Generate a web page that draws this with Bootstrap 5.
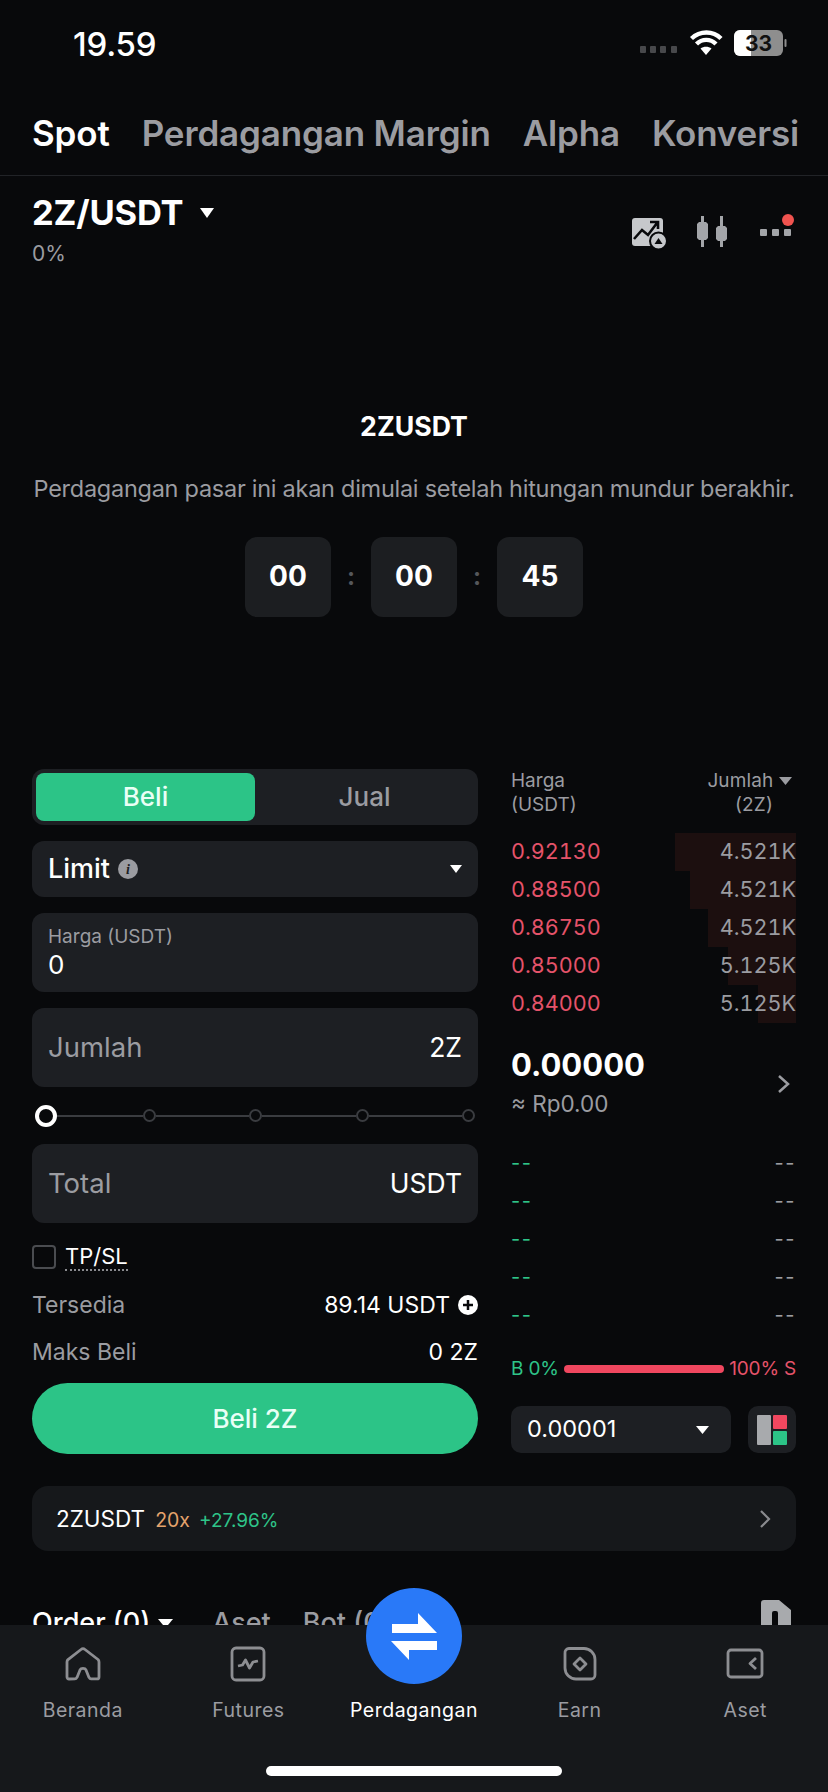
<!DOCTYPE html>
<html lang="id"><head><meta charset="utf-8"><title>Spot</title>
<link rel="stylesheet" href="https://cdn.jsdelivr.net/npm/bootstrap@5.3.0/dist/css/bootstrap.min.css">
<style>
html,body{margin:0;background:#08090b;height:1792px;overflow:hidden}
body{font-family:Inter,"Liberation Sans",sans-serif;color:#fff;font-size:24px;line-height:1.2}
.shell{width:828px;height:1792px}
.mainpane{height:1625px;overflow:hidden;flex:none}
.tg{color:#9b9ca1}.tw{color:#fff}.tr{color:#e5536a}.tgn{color:#2ec489}
.stat{height:90px;padding:0 39px 0 73px}
.stat-time{font-size:33px;font-weight:500;letter-spacing:-.2px}
.tabsbar{height:86px;padding:0 29px 0 32px;border-bottom:1px solid #212327;font-size:35px;font-weight:600;letter-spacing:-.15px}
.tabsbar span{white-space:nowrap}
.pairbar{height:140px;padding:17px 32px 0 32px}
.pair{font-size:34.500px;font-weight:700;letter-spacing:-.2px;line-height:40px}
.pct{font-size:21px;line-height:26px;margin-top:8px}
.hero{height:453px}
.hero h1{font-size:26.700px;font-weight:700;margin:0;line-height:30px;padding-top:95px}
.hero p{font-size:23.500px;letter-spacing:-.27px;margin:33px 0 0;line-height:30px;white-space:nowrap}
.cntr{margin-top:33px}
.cbox{width:86px;height:80px;background:#1c1e21;border-radius:12px;font-size:28px;font-weight:700}
.csep{width:40px;text-align:center;color:#55575b;font-weight:700;font-size:24px}
.trade{padding:0 32px;height:717px}
.lcol{width:446px;flex:none}
.rcol{width:285px;flex:none}
.seg{height:56px;background:#1d1f23;border-radius:12px;padding:4px;font-size:26px;font-weight:500}
.seg div{flex:1 1 0}
.seg .on{background:#2cc487;border-radius:8px;color:#e9fff6}
.fld{background:#1d1f23;border-radius:12px;padding:0 16px;margin-top:16px}
.fld-a{height:56px}.fld-b{height:79px;font-size:27.500px}
.fld-val{font-size:26.500px}
.lbl{font-size:19px;line-height:24px;color:#9b9ca1}
.sld{height:57px;padding:0 3px 0 3px}
.sld-line{height:2px;background:#3a3c40;flex:1 1 auto}
.sld-first{flex:0 0 86px}
.sld-k{width:13px;height:13px;border:2px solid #3a3c40;border-radius:50%;background:#08090b;flex:none}
.sld-k0{width:22px;height:22px;border:4px solid #fff;border-radius:50%;background:#08090b;flex:none}
.chkbox{width:24px;height:24px;border:2px solid #4a4c50;border-radius:4px;margin-right:9px}
.tpsl{font-size:22px;border-bottom:2px dotted #8a8b8f;line-height:25px}
.kv{font-size:23px;line-height:28px}
.buybtn{height:71px;width:100%;background:#2cc487;color:#e9fff6;border:0;border-radius:36px;font-size:26px;font-weight:500;margin-top:17px}
.bookh{font-size:19px;line-height:24px;height:60px}
.bookh-q{padding-right:4px;letter-spacing:.15px}
.bookr{height:38px;font-size:21.600px;font-variant-numeric:tabular-nums;background-repeat:no-repeat;background-position:right;background-image:linear-gradient(#1c0f0f,#1c0f0f)}
.bookd{height:38px;font-size:20px;letter-spacing:1.500px}
.price{font-size:31px;font-weight:700;line-height:38px}
.rp{font-size:22.500px;line-height:28px;margin-top:6px}
.ratiorow{font-size:19px;letter-spacing:-.2px;height:30px;margin-top:20px}
.ratio-bar{height:8px;background:#f0475f;border-radius:4px;flex:1 1 auto;margin:0 5px}
.tick{height:47px;width:220px;background:#1d1f23;border-radius:10px;padding:0 16px;font-size:23.500px}
.layb{height:47px;width:48px;background:#1d1f23;border-radius:10px}
.pcard{height:65px;background:#16181b;border-radius:16px;padding:0 24px;margin:0 32px;font-size:22.500px}
.ordr{padding:0 32px;margin-top:56px;font-size:27px;font-weight:500;height:60px}
.botnav{height:167px;background:#16181b;position:relative}
.navi{flex:1 1 0;padding-top:19px;font-size:19.500px;letter-spacing:.5px}
.navi svg{display:block;margin-bottom:15px}
.navgap{height:40px;margin-bottom:15px}
.nvstroke{fill:none;stroke:#8d8e92;stroke-width:2.800;stroke-linejoin:round}
.fab{position:absolute;left:366px;top:-37px;width:96px;height:96px;border-radius:50%;background:#2979f8}
.homeb{position:absolute;left:266px;top:141px;width:296px;height:10px;border-radius:5px;background:#fff}
</style></head><body>
<div class="shell d-flex flex-column">
<div class="mainpane">
  <div class="stat d-flex justify-content-between align-items-center">
    <div class="stat-time">19.59</div>
    <div class="d-flex align-items-center">
      <svg width="154" height="36" viewBox="0 0 154 36"><g fill="#47484b"><rect x="5" y="19" width="6" height="7" rx="1"/><rect x="15" y="19" width="6" height="7" rx="1"/><rect x="25" y="19" width="6" height="7" rx="1"/><rect x="36" y="19" width="6" height="7" rx="1"/></g><g fill="none" stroke="#fff" stroke-width="4.400"><path d="M56.500 11.500C65 3.500 78 3.500 86 11.500"/><path d="M61.500 17C67 11.500 75.500 11.500 81 17"/></g><path d="M71 28l-5.500-6.500C68.500 19 73.500 19 76.500 21.500z" fill="#fff"/><rect x="99" y="3" width="49" height="26" rx="6" fill="#8e8e8e"/><path d="M105 3h11v26h-11a6 6 0 0 1-6-6V9a6 6 0 0 1 6-6z" fill="#fff"/><rect x="149.500" y="12" width="2" height="8" rx="1" fill="#8e8e8e"/><text x="123.500" y="24" text-anchor="middle" font-family="Inter,sans-serif" font-size="21" font-weight="700" fill="#111">33</text></svg>
    </div>
  </div>
  <div class="tabsbar d-flex justify-content-between align-items-center">
    <span>Spot</span><span class="tg">Perdagangan Margin</span><span class="tg">Alpha</span><span class="tg">Konversi</span>
  </div>
  <div class="pairbar d-flex justify-content-between align-items-start">
    <div>
      <div class="pair d-flex align-items-center">2Z/USDT
        <svg class="ms-3" width="16" height="12" viewBox="0 0 16 12"><path d="M1 1h14L8 11z" fill="#fff"/></svg>
      </div>
      <div class="pct tg">0%</div>
    </div>
    <svg width="164" height="50" viewBox="0 0 164 50" style="margin-top:9px" aria-hidden="true">
      <rect x="0" y="16" width="31" height="28" rx="3" fill="#c6c8cb"/>
      <path d="M2 37l8-9 6 5 9-12M18 20h8v7" fill="none" stroke="#08090b" stroke-width="2.600"/>
      <circle cx="26.500" cy="39" r="8.500" fill="#c6c8cb" stroke="#08090b" stroke-width="2"/><path d="M22.500 42l4-6 4 6z" fill="#08090b"/>
      <g fill="#a3a5a9"><rect x="69" y="14" width="3" height="31"/><path d="M65 22l2-2h7l2 2v14l-2 2h-7l-2-2z"/><rect x="88" y="14" width="3" height="31"/><path d="M84 26l2-2h7l2 2v11l-2 2h-7l-2-2z"/></g>
      <g fill="#a3a5a9"><rect x="128" y="27" width="7" height="7" rx="1"/><rect x="140" y="27" width="7" height="7" rx="1"/><rect x="152" y="27" width="7" height="7" rx="1"/></g>
      <circle cx="156" cy="18" r="6" fill="#f0534f"/>
    </svg>
  </div>
  <div class="hero text-center d-flex flex-column align-items-center">
    <h1>2ZUSDT</h1>
    <p class="tg">Perdagangan pasar ini akan dimulai setelah hitungan mundur berakhir.</p>
    <div class="cntr d-flex align-items-center">
      <div class="cbox d-flex align-items-center justify-content-center">00</div><div class="csep">:</div>
      <div class="cbox d-flex align-items-center justify-content-center">00</div><div class="csep">:</div>
      <div class="cbox d-flex align-items-center justify-content-center">45</div>
    </div>
  </div>
  <div class="trade d-flex justify-content-between">
    <div class="lcol">
      <div class="seg d-flex text-center align-items-stretch">
        <div class="on d-flex align-items-center justify-content-center">Beli</div>
        <div class="tg d-flex align-items-center justify-content-center">Jual</div>
      </div>
      <div class="fld fld-a d-flex justify-content-between align-items-center">
        <div class="d-flex align-items-center" style="font-size:27px;font-weight:500">Limit
          <svg class="ms-2" width="20" height="20" viewBox="0 0 20 20"><circle cx="10" cy="10" r="10" fill="#9b9ca1"/><text x="10" y="15" text-anchor="middle" font-family="Liberation Serif,serif" font-style="italic" font-weight="700" font-size="14" fill="#1d1f23">i</text></svg>
        </div>
        <svg width="12" height="8" viewBox="0 0 12 8"><path d="M0 0h12L6 8z" fill="#fff"/></svg>
      </div>
      <div class="fld fld-b d-flex flex-column justify-content-center">
        <div class="lbl">Harga (USDT)</div><div style="line-height:32px;font-size:26px">0</div>
      </div>
      <div class="fld fld-b d-flex justify-content-between align-items-center">
        <span class="tg">Jumlah</span><span class="fld-val">2Z</span>
      </div>
      <div class="sld d-flex align-items-center">
        <div class="sld-k0"></div><div class="sld-line sld-first"></div><div class="sld-k"></div><div class="sld-line"></div><div class="sld-k"></div><div class="sld-line"></div><div class="sld-k"></div><div class="sld-line"></div><div class="sld-k"></div>
      </div>
      <div class="fld fld-b d-flex justify-content-between align-items-center" style="margin-top:0">
        <span class="tg">Total</span><span class="fld-val">USDT</span>
      </div>
      <div class="d-flex align-items-center" style="margin-top:21px;height:26px">
        <div class="chkbox"></div><span class="tpsl">TP/SL</span>
      </div>
      <div class="kv d-flex justify-content-between align-items-center" style="margin-top:21px">
        <span class="tg">Tersedia</span>
        <span class="d-flex align-items-center">89.14 USDT<svg class="ms-2" width="20" height="20" viewBox="0 0 20 20"><circle cx="10" cy="10" r="10" fill="#fff"/><path d="M10 5v10M5 10h10" stroke="#08090b" stroke-width="2.500"/></svg></span>
      </div>
      <div class="kv d-flex justify-content-between align-items-center" style="margin-top:19px">
        <span class="tg">Maks Beli</span><span>0 2Z</span>
      </div>
      <button class="buybtn" type="button">Beli 2Z</button>
    </div>
    <div class="rcol">
      <div class="bookh d-flex justify-content-between tg">
        <div>Harga<br>(USDT)</div>
        <div class="text-end bookh-q"><div>Jumlah <svg width="13" height="8" viewBox="0 0 13 8" style="vertical-align:2px"><path d="M0 0h13L6.500 8z" fill="#9b9ca1"/></svg></div><div style="padding-right:19px">(2Z)</div></div>
      </div>
      <div style="height:4px"></div>
      <div class="bookr d-flex justify-content-between align-items-center" style="background-size:121px 100%"><span class="tr">0.92130</span><span class="tg">4.521K</span></div>
      <div class="bookr d-flex justify-content-between align-items-center" style="background-size:106px 100%"><span class="tr">0.88500</span><span class="tg">4.521K</span></div>
      <div class="bookr d-flex justify-content-between align-items-center" style="background-size:88px 100%"><span class="tr">0.86750</span><span class="tg">4.521K</span></div>
      <div class="bookr d-flex justify-content-between align-items-center" style="background-size:68px 100%"><span class="tr">0.85000</span><span class="tg">5.125K</span></div>
      <div class="bookr d-flex justify-content-between align-items-center" style="background-size:38px 100%"><span class="tr">0.84000</span><span class="tg">5.125K</span></div>
      <div class="d-flex justify-content-between align-items-center" style="margin-top:21px;height:76px">
        <div><div class="price">0.00000</div><div class="rp tg">≈ Rp0.00</div></div>
        <svg width="14" height="20" viewBox="0 0 14 20" style="margin-right:5px;margin-top:4px"><path d="M2 2l9 8-9 8" fill="none" stroke="#9b9ca1" stroke-width="2.500"/></svg>
      </div>
      <div style="height:24px"></div>
      <div class="bookd d-flex justify-content-between align-items-center"><span class="tgn">--</span><span class="tg">--</span></div>
      <div class="bookd d-flex justify-content-between align-items-center"><span class="tgn">--</span><span class="tg">--</span></div>
      <div class="bookd d-flex justify-content-between align-items-center"><span class="tgn">--</span><span class="tg">--</span></div>
      <div class="bookd d-flex justify-content-between align-items-center"><span class="tgn">--</span><span class="tg">--</span></div>
      <div class="bookd d-flex justify-content-between align-items-center"><span class="tgn">--</span><span class="tg">--</span></div>
      <div class="ratiorow d-flex align-items-center"><span class="tgn">B 0%</span><div class="ratio-bar"></div><span class="tr">100% S</span></div>
      <div class="d-flex justify-content-between" style="margin-top:22px">
        <div class="tick d-flex justify-content-between align-items-center"><span>0.00001</span><svg width="13" height="8" viewBox="0 0 13 8" style="margin-right:6px"><path d="M0 0h13L6.500 8z" fill="#fff"/></svg></div>
        <div class="layb d-flex align-items-center justify-content-center"><svg width="32" height="32" viewBox="0 0 32 32"><rect x="1" y="1" width="14" height="30" rx="1" fill="#a8aaad"/><rect x="17" y="1" width="14" height="14" rx="1" fill="#f0475f"/><rect x="17" y="17" width="14" height="14" rx="1" fill="#2cc487"/></svg></div>
      </div>
    </div>
  </div>
  <div class="pcard d-flex justify-content-between align-items-center">
    <div class="d-flex align-items-baseline"><span>2ZUSDT</span><span style="color:#e5a36c;font-size:19.500px;margin-left:10px">20x</span><span class="tgn" style="font-size:19px;margin-left:9px">+27.96%</span></div>
    <svg width="13" height="20" viewBox="0 0 13 20"><path d="M2 2l8 8-8 8" fill="none" stroke="#8a8b8f" stroke-width="2.200"/></svg>
  </div>
  <div class="ordr d-flex align-items-start justify-content-between">
    <div class="d-flex align-items-center">
      <span>Order (0)</span>
      <svg class="ms-2" width="15" height="9" viewBox="0 0 15 9"><path d="M0 0h15L7.500 9z" fill="#fff"/></svg>
      <span class="tg" style="margin-left:39px">Aset</span><span class="tg" style="margin-left:32px">Bot (0)</span>
    </div>
    <svg width="30" height="40" viewBox="0 0 30 40" style="margin-top:-7px;margin-right:5px"><path d="M3 0h15l12 10v30H17V13a2 2 0 0 0-2-2h-2a2 2 0 0 0-2 2v27H0V3a3 3 0 0 1 3-3z" fill="#a8aaad"/></svg>
  </div>
</div>
<nav class="botnav d-flex text-center tg">
  <div class="navi d-flex flex-column align-items-center">
    <svg width="40" height="40" viewBox="0 0 40 40"><path class="nvstroke" d="M6 35a2 2 0 0 1-2-2V18c0-1 .4-1.800 1-2.400L18 5.500a3 3 0 0 1 4 0l13 10c.6.6 1 1.400 1 2.400v15a2 2 0 0 1-2 2h-6c-1 0-1.500-.6-2-1.500l-3-7.500c-.5-1-1-1.500-3-1.500s-2.500.5-3 1.500l-3 7.500c-.5.9-1 1.500-2 1.500z"/></svg>Beranda</div>
  <div class="navi d-flex flex-column align-items-center">
    <svg width="40" height="40" viewBox="0 0 40 40"><rect class="nvstroke" x="4" y="4" width="32" height="32" rx="4"/><path class="nvstroke" d="M10 22l4.500-1 3-5 4 8 3.500-6 5-1"/></svg>Futures</div>
  <div class="navi d-flex flex-column align-items-center tw">
    <span class="navgap"></span>Perdagangan</div>
  <div class="navi d-flex flex-column align-items-center">
    <svg width="40" height="40" viewBox="0 0 40 40"><path class="nvstroke" d="M9 4.500h15a11 11 0 0 1 11 11V31a4 4 0 0 1-4 4H16a11 11 0 0 1-11-11V9a4 4 0 0 1 4-4.500z"/><path class="nvstroke" d="M20 14l6 6-6 6-6-6z"/></svg>Earn</div>
  <div class="navi d-flex flex-column align-items-center">
    <svg width="40" height="40" viewBox="0 0 40 40"><rect class="nvstroke" x="3" y="6" width="34" height="27" rx="3"/><path class="nvstroke" d="M31 14l-6 5.500 6 5.500"/></svg>Aset</div>
  <div class="fab d-flex align-items-center justify-content-center">
    <svg width="46" height="50" viewBox="0 0 46 50"><path d="M1 13h26V2l19 20H1zM0 30h46v9H18v10z" fill="#fff"/></svg>
  </div>
  <div class="homeb"></div>
</nav>
</div>
<script src="https://cdn.jsdelivr.net/npm/bootstrap@5.3.0/dist/js/bootstrap.bundle.min.js"></script>
</body></html>
